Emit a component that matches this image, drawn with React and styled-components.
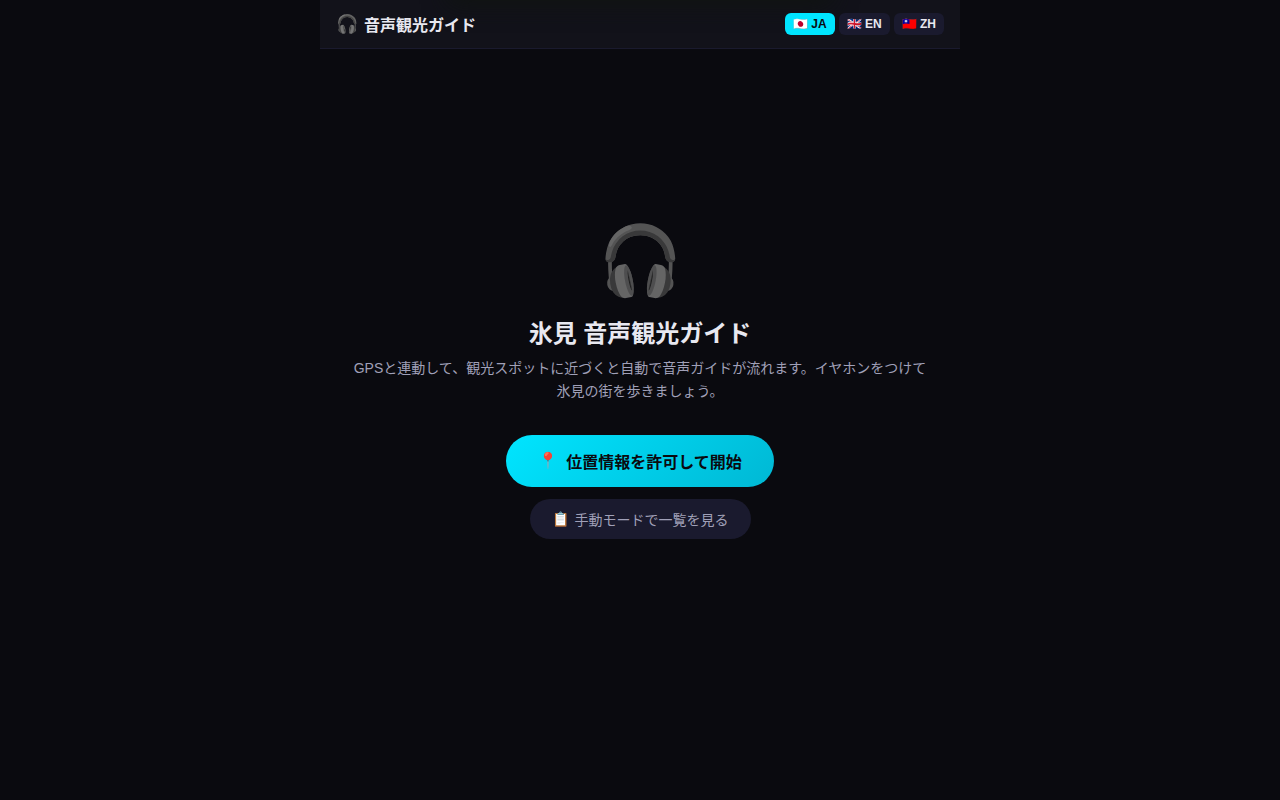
import React, { useState } from "react";
import styled, { createGlobalStyle } from "styled-components";

const GlobalStyle = createGlobalStyle`
  *, *::before, *::after { box-sizing: border-box; }
  body {
    margin: 0;
    background: #0a0a0f;
    color: #e8e8f0;
    font-family: "Liberation Sans", "Noto Sans CJK JP", sans-serif;
  }
  button { font-family: inherit; cursor: pointer; border: 0; }
`;

const Shell = styled.div`
  max-width: 640px;
  min-height: 100vh;
  margin: 0 auto;
  display: flex;
  flex-direction: column;
`;

const Header = styled.header`
  position: relative;
  isolation: isolate;
  overflow: hidden;
  display: flex;
  align-items: center;
  justify-content: space-between;
  padding: 12px 16px;
  background: #12121a;
  border-bottom: 1px solid #1a1a2e;

  /* soft shade falling in from the top edge */
  &::before {
    content: "";
    position: absolute;
    z-index: -1;
    bottom: 100%;
    left: 20%;
    right: 20%;
    height: 40px;
    box-shadow: 0 4px 24px rgba(16, 20, 16, 0.9);
  }
`;

const Brand = styled.div`
  display: flex;
  align-items: center;
  gap: 6px;
  font-size: 16px;
  font-weight: 700;
`;

const BrandIcon = styled.span`
  font-size: 18px;
  line-height: 24px;
`;

const Languages = styled.div`
  display: flex;
  gap: 4px;
`;

const LanguageButton = styled.button`
  padding: 4px 8px;
  border-radius: 6px;
  font-size: 12px;
  line-height: 14px;
  font-weight: 600;
  background: ${(p) => (p.$active ? "#00e5ff" : "#1a1a2e")};
  color: ${(p) => (p.$active ? "#0a0a0f" : "#e8e8f0")};
`;

const Welcome = styled.main`
  flex: 1;
  display: flex;
  flex-direction: column;
  align-items: center;
  justify-content: center;
  padding: 24px 32px 126px;
  text-align: center;
`;

const HeroIcon = styled.div`
  margin-bottom: 6px;
  font-size: 68px;
  line-height: 102px;
  opacity: 0.85;
`;

const Title = styled.h1`
  margin: 0 0 6px;
  font-size: 24px;
  line-height: 34px;
  font-weight: 700;
`;

const Description = styled.p`
  margin: 0 0 32px;
  font-size: 14px;
  line-height: 23px;
  color: #a0a0b8;
`;

const Actions = styled.div`
  display: flex;
  flex-direction: column;
  align-items: center;
  gap: 12px;
`;

const ActionButton = styled.button`
  display: flex;
  align-items: center;
  justify-content: center;
  border-radius: 50px;
`;

const PrimaryButton = styled(ActionButton)`
  gap: 8px;
  min-height: 52px;
  padding: 14px 32px;
  font-size: 16px;
  font-weight: 700;
  color: #0a0a0f;
  background: linear-gradient(135deg, #00e5ff, #00b8d4);
`;

const SecondaryButton = styled(ActionButton)`
  gap: 6px;
  min-height: 40px;
  padding: 10px 22px;
  font-size: 14px;
  color: #a0a0b8;
  background: #1a1a2e;
`;

const languages = [
  { code: "JA", flag: "🇯🇵" },
  { code: "EN", flag: "🇬🇧" },
  { code: "ZH", flag: "🇹🇼" },
];

export default function App() {
  const [language, setLanguage] = useState("JA");
  return (
    <>
      <GlobalStyle />
      <Shell lang="ja">
        <Header>
          <Brand>
            <BrandIcon>🎧</BrandIcon>
            <span>音声観光ガイド</span>
          </Brand>
          <Languages>
            {languages.map(({ code, flag }) => (
              <LanguageButton
                key={code}
                type="button"
                $active={code === language}
                aria-pressed={code === language}
                onClick={() => setLanguage(code)}
              >
                {flag} {code}
              </LanguageButton>
            ))}
          </Languages>
        </Header>
        <Welcome>
          <HeroIcon>🎧</HeroIcon>
          <Title>氷見 音声観光ガイド</Title>
          <Description>
            GPSと連動して、観光スポットに近づくと自動で音声ガイドが流れます。イヤホンをつけて氷見の街を歩きましょう。
          </Description>
          <Actions>
            <PrimaryButton type="button">
              <span>📍</span>
              <span>位置情報を許可して開始</span>
            </PrimaryButton>
            <SecondaryButton type="button">
              <span>📋</span>
              <span>手動モードで一覧を見る</span>
            </SecondaryButton>
          </Actions>
        </Welcome>
      </Shell>
    </>
  );
}
